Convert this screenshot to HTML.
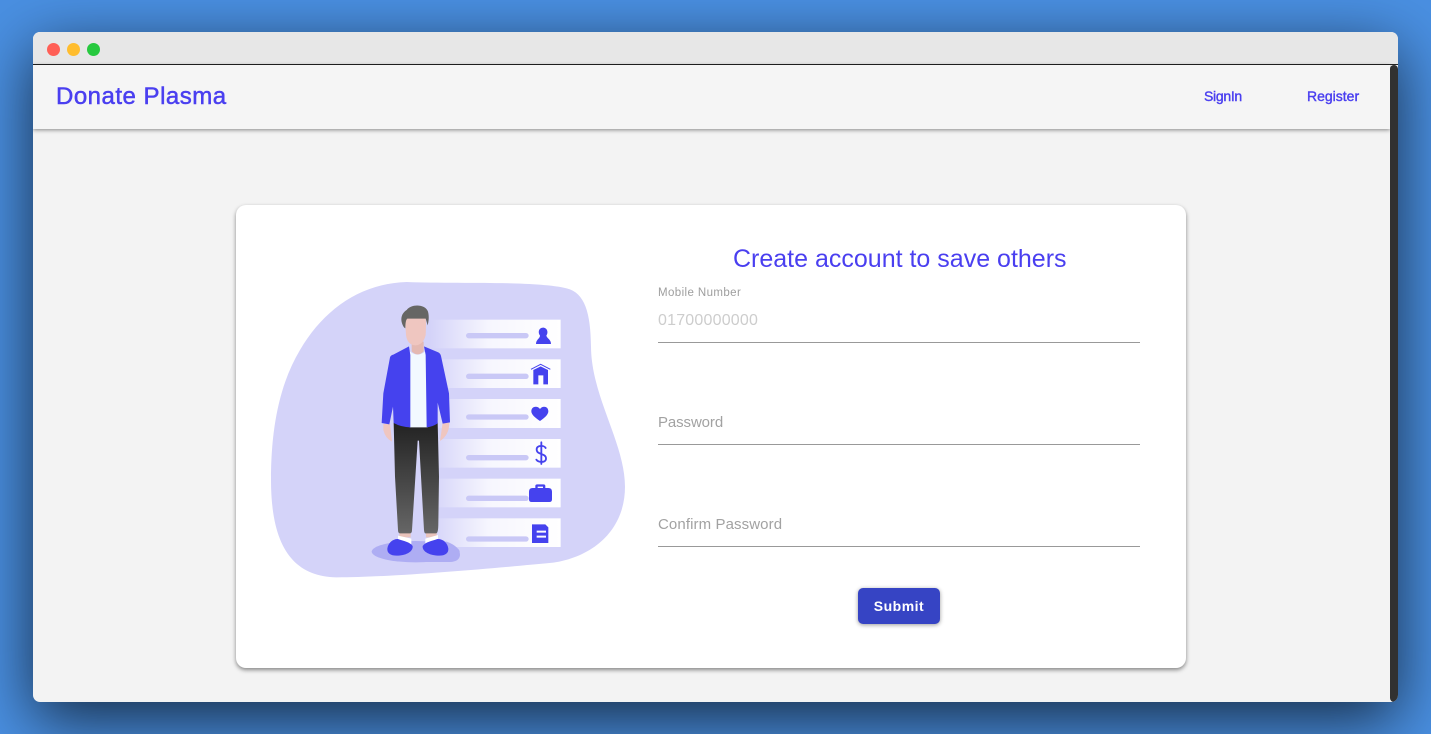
<!DOCTYPE html>
<html lang="en"><head><meta charset="utf-8"><title>Donate Plasma</title>
<style>
html,body{margin:0;padding:0;width:1431px;height:734px;overflow:hidden;background:#4a90e2;font-family:"Liberation Sans",sans-serif}
.win{position:absolute;left:33px;top:32px;width:1365px;height:670px;border-radius:7px;background:#f3f3f3;box-shadow:0 18px 64px rgba(0,0,0,.7);overflow:hidden}
.bar{position:absolute;left:0;top:0;width:1365px;height:32px;background:#e7e7e7;border-bottom:1px solid #222}
.dot{position:absolute;top:10.5px;width:13px;height:13px;border-radius:50%}
.nav{position:absolute;left:0;top:33px;width:1357px;height:64px;background:#f5f5f5;box-shadow:0 1px 4px rgba(0,0,0,.45)}
.sb{position:absolute;left:1357px;top:33px;width:8px;height:637px;background:#313131;border-radius:4px}
.t{position:absolute;white-space:nowrap;line-height:1}
.blue{color:#4a3ff0}
.card{position:absolute;left:236px;top:205px;width:950px;height:463px;background:#fff;border-radius:10px;box-shadow:0 2px 4px rgba(0,0,0,.45)}
.line{position:absolute;left:658px;width:482px;height:1px;background:#999}
.btn{position:absolute;left:858px;top:588px;width:82px;height:36px;background:#3644c4;border-radius:5px;box-shadow:0 1px 4px rgba(0,0,0,.4);color:#fff;font-weight:700;font-size:14px;letter-spacing:.5px;line-height:36px;text-align:center}
svg{position:absolute;left:0;top:0}
</style></head><body>
<div class="win">
  <div class="bar">
    <span class="dot" style="left:13.5px;background:#ff5f56"></span>
    <span class="dot" style="left:33.5px;background:#ffbd2e"></span>
    <span class="dot" style="left:53.5px;background:#27c93f"></span>
  </div>
  <div class="nav"></div>
  <div class="sb"></div>
</div>
<div class="t blue" style="left:56px;top:85px;font-size:24px;letter-spacing:.5px;-webkit-text-stroke:.5px #4a3ff0">Donate Plasma</div>
<div class="t blue" style="left:1204px;top:89px;font-size:14px;letter-spacing:-.3px;-webkit-text-stroke:.4px #4a3ff0">SignIn</div>
<div class="t blue" style="left:1307px;top:89px;font-size:14px;-webkit-text-stroke:.4px #4a3ff0">Register</div>
<div class="card"></div>
<svg width="1431" height="734" viewBox="0 0 1431 734">
<defs>
<linearGradient id="c" x1="0" x2="1" y1="0" y2="0"><stop offset="0" stop-color="#fff" stop-opacity="0"/><stop offset=".45" stop-color="#fff" stop-opacity=".8"/><stop offset="1" stop-color="#fff"/></linearGradient>
<linearGradient id="p" x1="0" x2="0" y1="0" y2="1"><stop offset="0" stop-color="#222"/><stop offset="1" stop-color="#666"/></linearGradient>
</defs>
<g transform="translate(260 270) scale(.33333)">
<path fill="#d4d3f9" d="M440 36C600 42 820 32 920 55C975 68 992 130 993 230C994 380 1095 520 1095 650C1095 780 1000 860 880 878C700 895 400 922 230 922C100 920 33 830 33 630C33 470 60 340 120 240C190 120 300 40 440 36Z"/>
<g fill="url(#c)">
<rect x="510" y="149" width="392" height="86"/><rect x="510" y="268" width="392" height="86"/><rect x="510" y="387" width="392" height="87"/><rect x="510" y="507" width="392" height="86"/><rect x="510" y="626" width="392" height="86"/><rect x="510" y="745" width="392" height="86"/>
</g>
<g fill="#c9c8f6">
<rect x="618" y="189" width="188" height="16" rx="8"/><rect x="618" y="311" width="188" height="16" rx="8"/><rect x="618" y="433" width="188" height="16" rx="8"/><rect x="618" y="555" width="188" height="16" rx="8"/><rect x="618" y="677" width="188" height="16" rx="8"/><rect x="618" y="799" width="188" height="16" rx="8"/>
</g>
<g fill="#4542ee">
<path d="M849 173C862 173 866 188 859 197C861 206 873 208 873 222H828C828 208 840 206 840 197C833 188 836 173 849 173Z"/>
<path d="M820 300L842 289L864 300V343H850V316H835V343H820Z"/>
<path d="M840 453C825 443 814 433 814 424C814 409 832 406 840 417C848 406 865 409 865 424C865 433 855 443 840 453Z"/>
<path fill-rule="evenodd" d="M807 665Q807 654 818 654H826V648Q826 643 832 643H850Q856 643 856 648V654H865Q876 654 876 665V688Q876 696 868 696H815Q807 696 807 688ZM833 654H849V650H833Z"/>
<path fill-rule="evenodd" d="M816 763H856L865 772V819H816ZM830 782V788H858V782ZM830 797V803H858V797Z"/>
</g>
<path fill="none" stroke="#4542ee" stroke-width="3" d="M813 298L842 283L871 298"/>
<path fill="none" stroke="#4542ee" stroke-width="5.5" stroke-linecap="round" d="M857 534C852 525 830 525 830 538C830 556 858 548 858 566C858 579 835 578 829 569M844 517V582"/>
<ellipse cx="467" cy="845" rx="132" ry="32" fill="#aeadf3"/>
<path fill="#aeadf3" d="M470 815H560Q600 830 600 855Q598 875 570 876H450Z"/>
<path fill="#efc6c0" d="M370 462H390L396 515Q376 505 370 480ZM548 458H568Q568 495 540 513Z"/>
<path fill="#e9c3bb" d="M418 785H452V802H418ZM498 785H530V802H498Z"/>
<path fill="#fff" d="M414 797L454 806V822H414ZM496 806L534 795V822H496Z"/>
<path fill="url(#p)" d="M401 458L533 458L537 620L535 760Q535 790 528 790H496Q493 790 492 780L477 512H473L456 780Q456 790 450 790H420Q414 790 414 780L405 620Z"/>
<path fill="#4542ee" d="M382 836C384 818 400 806 414 807C430 813 450 816 458 828C460 846 436 857 410 857C392 857 381 850 382 836Z"/>
<path fill="#4542ee" d="M488 828C496 816 516 813 532 807C548 806 563 818 565 836C566 850 555 857 538 857C512 857 486 846 488 828Z"/>
<path fill="#e4b9b2" d="M455 215H491V244Q473 262 455 244Z"/>
<path fill="#f2f9ff" d="M448 243Q473 265 497 243L503 472H449Z"/>
<path fill="#4542ee" d="M447 229L451 255L451 472Q425 472 401 459L399 410L388 463L365 459L370 370L390 262Q392 256 400 254ZM492 229L535 247Q541 250 543 258L567 370L570 457L548 461L533 398L533 460Q518 470 500 472L497 255Z"/>
<path fill="#efc6c0" d="M435 145H497Q499 155 497 195Q490 225 466 226Q442 225 438 195Z"/>
<path fill="#666664" d="M432 172C418 150 424 130 440 120C455 100 497 103 504 125C508 140 506 155 503 166L497 146H442Q436 150 436 175Z"/>
</g>
</svg>
<div class="t blue" style="left:733px;top:247px;font-size:25px">Create account to save others</div>
<div class="t" style="left:658px;top:288px;font-size:11.5px;letter-spacing:.4px;color:#9e9e9e">Mobile Number</div>
<div class="t" style="left:658px;top:313px;font-size:16px;letter-spacing:.2px;color:#cdcdcd">01700000000</div>
<div class="line" style="top:342px"></div>
<div class="t" style="left:658px;top:415px;font-size:15px;letter-spacing:-.1px;color:#a2a2a2">Password</div>
<div class="line" style="top:444px"></div>
<div class="t" style="left:658px;top:517px;font-size:15px;letter-spacing:.1px;color:#a2a2a2">Confirm Password</div>
<div class="line" style="top:546px"></div>
<div class="btn">Submit</div>
</body></html>
